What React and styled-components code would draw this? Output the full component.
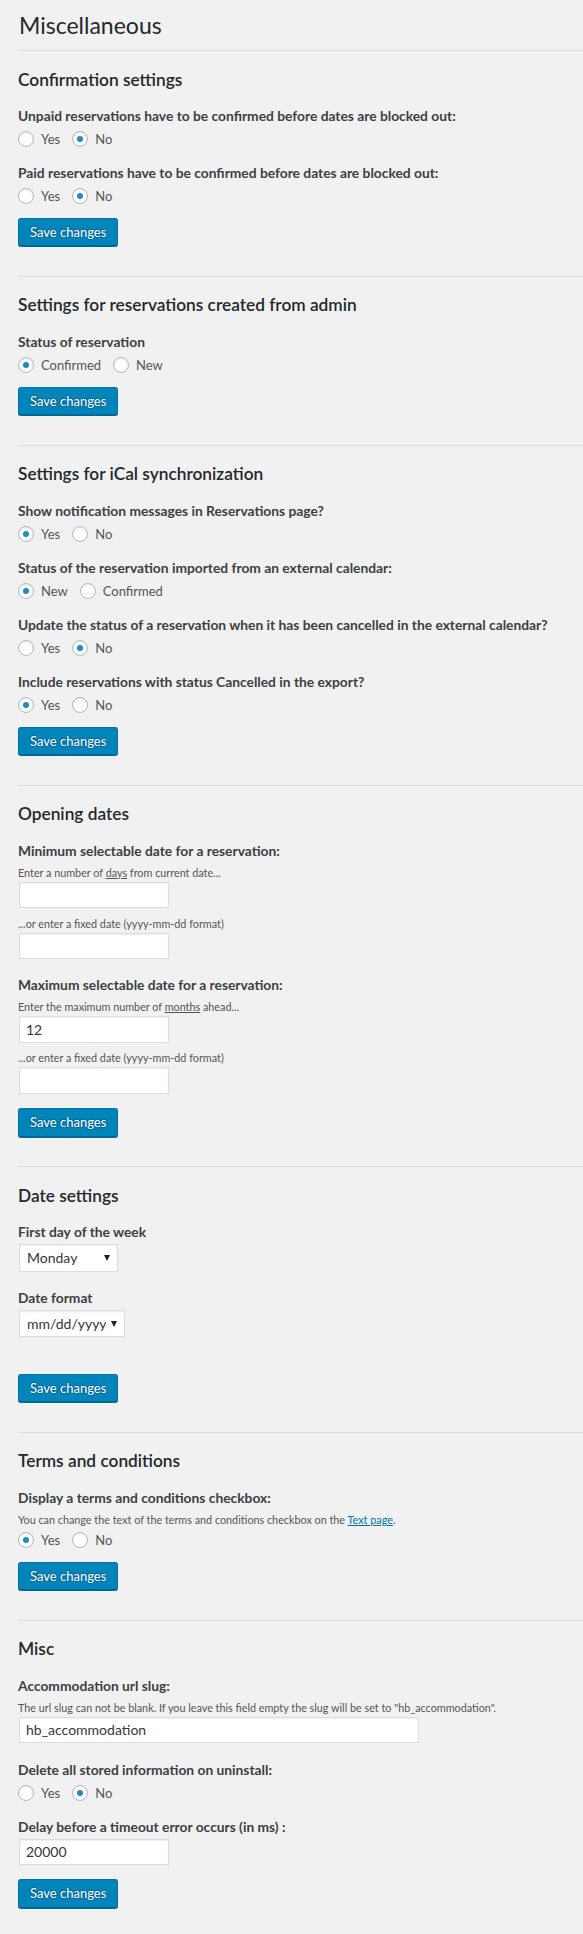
import React from 'react';
import styled, { createGlobalStyle } from 'styled-components';

const GlobalStyle = createGlobalStyle`
  html, body {
    margin: 0;
    padding: 0;
    background: #f1f1f1;
  }
  body {
    font-family: Lato, "Open Sans", sans-serif;
    font-size: 13px;
    color: #444;
  }
  * {
    box-sizing: border-box;
  }
`;

const Wrap = styled.div`
  padding: 10px 0 0 18px;
`;

const PageTitle = styled.h1`
  margin: 0;
  padding: 1px 0 10px 1px;
  font-size: 23px;
  font-weight: 400;
  line-height: 29px;
  color: #23282d;
  border-bottom: 1px solid #ddd;
`;

// flex column so the small margins between rows add up instead of collapsing
const Section = styled.section`
  display: flex;
  flex-direction: column;
  align-items: flex-start;
  padding: 15.5px 0 29.5px;
  border-bottom: 1px solid #ddd;

  &:last-child {
    border-bottom: none;
    padding-bottom: 26px;
  }
`;

const SectionTitle = styled.h3`
  margin: 0 0 15.5px;
  font-size: 17.3px;
  font-weight: 600;
  line-height: 25px;
  color: #23282d;
`;

const Field = styled.div`
  display: flex;
  flex-direction: column;
  align-items: flex-start;

  & + & {
    margin-top: 16px;
  }
`;

const FieldLabel = styled.div`
  font-size: 13.8px;
  font-weight: 700;
  line-height: 18px;
  color: #3c4043;
`;

const Hint = styled.div`
  margin-top: ${p => (p.$gap !== undefined ? p.$gap : 5)}px;
  font-size: 10.8px;
  line-height: 16px;
  color: #555;

  u {
    text-decoration: underline;
  }
`;

const HintLink = styled.a`
  color: #0073aa;
  text-decoration: underline;
`;

const RadioRow = styled.div`
  display: flex;
  align-items: center;
  height: 18px;
  margin-top: ${p => (p.$gap !== undefined ? p.$gap : 5)}px;
`;

const RadioOption = styled.label`
  display: inline-flex;
  align-items: center;
  margin-right: 12px;
  font-size: 13px;
  line-height: 18px;
  color: #555;
`;

const Radio = styled.input.attrs({ type: 'radio' })`
  appearance: none;
  -webkit-appearance: none;
  display: grid;
  place-content: center;
  width: 16px;
  height: 16px;
  margin: 0 7px 0 0;
  border: 1px solid #b4b9be;
  border-radius: 50%;
  background: #fff;
  box-shadow: inset 0 1px 2px rgba(0, 0, 0, 0.1);

  &:checked::before {
    content: '';
    width: 6px;
    height: 6px;
    border-radius: 50%;
    background: #1e8cbe;
  }
`;

const TextInput = styled.input.attrs({ type: 'text' })`
  display: block;
  width: ${p => p.$width || 150}px;
  height: 26.4px;
  margin: ${p => (p.$gap !== undefined ? p.$gap : 1)}px 0 1.5px 1px;
  padding: 0 6px;
  border: 1px solid #ddd;
  background: #fff;
  box-shadow: inset 0 1px 2px rgba(0, 0, 0, 0.07);
  font-family: Lato, "Open Sans", sans-serif;
  font-size: 14px;
  color: #32373c;
  outline: none;
`;

const SelectBox = styled.div`
  position: relative;
  margin: 3px 0 1.5px 1px;

  &::after {
    content: '';
    position: absolute;
    right: 8px;
    top: 50%;
    margin-top: -3px;
    border-left: 3.5px solid transparent;
    border-right: 3.5px solid transparent;
    border-top: 6px solid #222;
    pointer-events: none;
  }
`;

const Select = styled.select`
  appearance: none;
  -webkit-appearance: none;
  display: block;
  width: ${p => p.$width}px;
  height: 27.4px;
  padding: 0 18px 0 7px;
  border: 1px solid #ddd;
  border-radius: 0;
  background: #fff;
  box-shadow: inset 0 1px 2px rgba(0, 0, 0, 0.07);
  font-family: Lato, "Open Sans", sans-serif;
  font-size: 14px;
  color: #32373c;
  outline: none;
`;

const SaveButton = styled.button`
  display: block;
  height: 28.4px;
  margin-top: ${p => (p.$gap !== undefined ? p.$gap : 13)}px;
  padding: 0 11px 1px;
  border: 1px solid #0073aa;
  border-bottom-color: #006799;
  border-radius: 3px;
  background: #0085ba;
  box-shadow: 0 1px 0 #006799;
  color: #fff;
  font-family: Lato, "Open Sans", sans-serif;
  font-size: 13px;
  line-height: 26px;
  text-shadow: 0 -1px 1px #006799, 1px 0 1px #006799, 0 1px 1px #006799, -1px 0 1px #006799;
  cursor: pointer;
`;

const YesNo = ({ name, value }) => (
  <RadioRow>
    <RadioOption>
      <Radio name={name} defaultChecked={value === 'yes'} />
      Yes
    </RadioOption>
    <RadioOption>
      <Radio name={name} defaultChecked={value === 'no'} />
      No
    </RadioOption>
  </RadioRow>
);

export default function App() {
  return (
    <>
      <GlobalStyle />
      <Wrap>
        <PageTitle>Miscellaneous</PageTitle>

        <Section>
          <SectionTitle>Confirmation settings</SectionTitle>
          <Field>
            <FieldLabel>Unpaid reservations have to be confirmed before dates are blocked out:</FieldLabel>
            <YesNo name="unpaid" value="no" />
          </Field>
          <Field>
            <FieldLabel>Paid reservations have to be confirmed before dates are blocked out:</FieldLabel>
            <YesNo name="paid" value="no" />
          </Field>
          <SaveButton>Save changes</SaveButton>
        </Section>

        <Section>
          <SectionTitle>Settings for reservations created from admin</SectionTitle>
          <Field>
            <FieldLabel>Status of reservation</FieldLabel>
            <RadioRow>
              <RadioOption>
                <Radio name="admin-status" defaultChecked />
                Confirmed
              </RadioOption>
              <RadioOption>
                <Radio name="admin-status" />
                New
              </RadioOption>
            </RadioRow>
          </Field>
          <SaveButton>Save changes</SaveButton>
        </Section>

        <Section>
          <SectionTitle>Settings for iCal synchronization</SectionTitle>
          <Field>
            <FieldLabel>Show notification messages in Reservations page?</FieldLabel>
            <YesNo name="ical-notif" value="yes" />
          </Field>
          <Field>
            <FieldLabel>Status of the reservation imported from an external calendar:</FieldLabel>
            <RadioRow>
              <RadioOption>
                <Radio name="ical-status" defaultChecked />
                New
              </RadioOption>
              <RadioOption>
                <Radio name="ical-status" />
                Confirmed
              </RadioOption>
            </RadioRow>
          </Field>
          <Field>
            <FieldLabel>Update the status of a reservation when it has been cancelled in the external calendar?</FieldLabel>
            <YesNo name="ical-update" value="no" />
          </Field>
          <Field>
            <FieldLabel>Include reservations with status Cancelled in the export?</FieldLabel>
            <YesNo name="ical-export" value="yes" />
          </Field>
          <SaveButton>Save changes</SaveButton>
        </Section>

        <Section>
          <SectionTitle>Opening dates</SectionTitle>
          <Field>
            <FieldLabel>Minimum selectable date for a reservation:</FieldLabel>
            <Hint>
              Enter a number of <u>days</u> from current date...
            </Hint>
            <TextInput defaultValue="" />
            <Hint $gap={6}>...or enter a fixed date (yyyy-mm-dd format)</Hint>
            <TextInput defaultValue="" />
          </Field>
          <Field>
            <FieldLabel>Maximum selectable date for a reservation:</FieldLabel>
            <Hint>
              Enter the maximum number of <u>months</u> ahead...
            </Hint>
            <TextInput defaultValue="12" />
            <Hint $gap={6}>...or enter a fixed date (yyyy-mm-dd format)</Hint>
            <TextInput defaultValue="" />
          </Field>
          <SaveButton>Save changes</SaveButton>
        </Section>

        <Section>
          <SectionTitle>Date settings</SectionTitle>
          <Field>
            <FieldLabel>First day of the week</FieldLabel>
            <SelectBox>
              <Select $width={99} defaultValue="monday">
                <option value="monday">Monday</option>
                <option value="sunday">Sunday</option>
              </Select>
            </SelectBox>
          </Field>
          <Field>
            <FieldLabel>Date format</FieldLabel>
            <SelectBox>
              <Select $width={106} defaultValue="mdy">
                <option value="mdy">mm/dd/yyyy</option>
                <option value="dmy">dd/mm/yyyy</option>
              </Select>
            </SelectBox>
          </Field>
          <SaveButton $gap={35}>Save changes</SaveButton>
        </Section>

        <Section>
          <SectionTitle>Terms and conditions</SectionTitle>
          <Field>
            <FieldLabel>Display a terms and conditions checkbox:</FieldLabel>
            <Hint>
              You can change the text of the terms and conditions checkbox on the{' '}
              <HintLink href="#text">Text page</HintLink>.
            </Hint>
            <RadioRow $gap={3}>
              <RadioOption>
                <Radio name="terms" defaultChecked />
                Yes
              </RadioOption>
              <RadioOption>
                <Radio name="terms" />
                No
              </RadioOption>
            </RadioRow>
          </Field>
          <SaveButton>Save changes</SaveButton>
        </Section>

        <Section>
          <SectionTitle>Misc</SectionTitle>
          <Field>
            <FieldLabel>Accommodation url slug:</FieldLabel>
            <Hint>
              The url slug can not be blank. If you leave this field empty the slug will be set to
              "hb_accommodation".
            </Hint>
            <TextInput $width={400} defaultValue="hb_accommodation" />
          </Field>
          <Field>
            <FieldLabel>Delete all stored information on uninstall:</FieldLabel>
            <YesNo name="uninstall" value="no" />
          </Field>
          <Field>
            <FieldLabel>Delay before a timeout error occurs (in ms) :</FieldLabel>
            <TextInput $gap={3} defaultValue="20000" />
          </Field>
          <SaveButton>Save changes</SaveButton>
        </Section>
      </Wrap>
    </>
  );
}
